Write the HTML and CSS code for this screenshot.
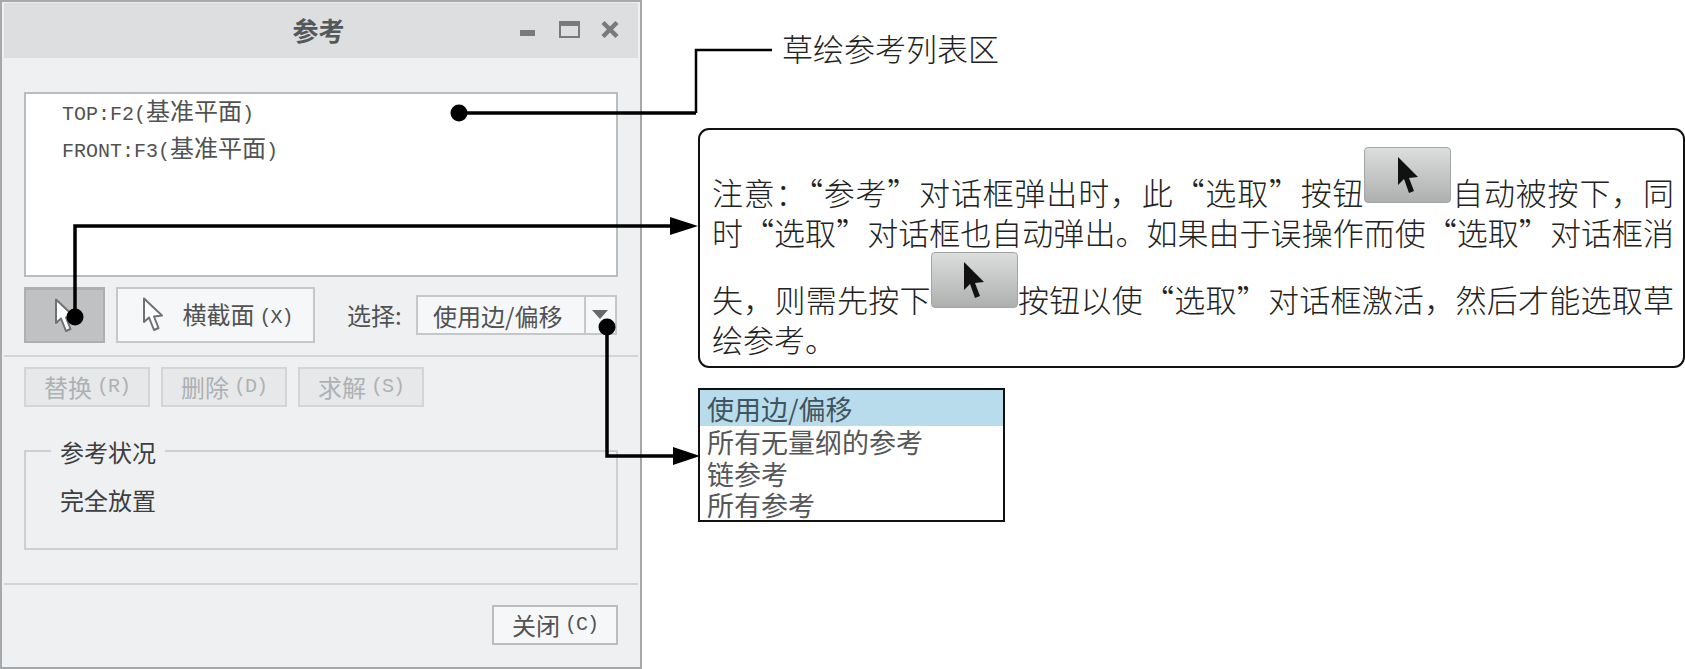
FILE: index.html
```html
<!DOCTYPE html>
<html lang="zh-CN">
<head>
<meta http-equiv="Content-Type" content="text/html; charset=utf-8">
<title>参考</title>
<link rel="stylesheet" href="styles.css">
</head>

<body>

<div class="page">
  <div class="dialog">
    <div class="dialog__title">
      <span class="dialog__name">参考</span>
      <div class="dialog__controls">
        <svg class="ctl ctl--min" width="15" height="6" viewBox="0 0 15 6"><rect width="15" height="6" fill="#777b7c"/></svg>
        <svg class="ctl ctl--max" width="21" height="17" viewBox="0 0 21 17"><rect x="1" y="1" width="19" height="15" fill="none" stroke="#777b7c" stroke-width="2"/><rect width="21" height="5" fill="#777b7c"/></svg>
        <svg class="ctl ctl--close" width="18" height="17" viewBox="0 0 18 17"><path d="M2 1.5 16 15.5M16 1.5 2 15.5" stroke="#777b7c" stroke-width="4.4" fill="none"/></svg>
      </div>
    </div>

    <div class="section">
      <div class="reflist">
        <p class="reflist__item">TOP:F2(<span class="cjk">基准平面</span>)</p>
        <p class="reflist__item">FRONT:F3(<span class="cjk">基准平面</span>)</p>
      </div>

      <div class="tools">
        <button class="btn btn--pressed" type="button">
          <svg width="22" height="36" viewBox="0 0 22 36"><path d="M2 1.500 2 25 7 20.500 12 33 16.500 31 12 19.500 20 18.500Z" fill="#fff" stroke="#6f7273" stroke-width="2" stroke-linejoin="round"/></svg>
        </button>
        <button class="btn btn--section" type="button">
          <svg width="22" height="36" viewBox="0 0 22 36"><path d="M2 1.500 2 25 7 20.500 12 33 16.500 31 12 19.500 20 18.500Z" fill="#fff" stroke="#6f7273" stroke-width="2" stroke-linejoin="round"/></svg>
          <span class="btn__text">横截面<span class="key">(X)</span></span>
        </button>
        <span class="tools__label">选择:</span>
        <div class="combo">
          <span class="combo__value">使用边/偏移</span>
          <span class="combo__arrow"></span>
        </div>
      </div>
    </div>

    <div class="section section--rule">
      <div class="actions">
        <button class="btn btn--off" type="button">替换<span class="key">(R)</span></button>
        <button class="btn btn--off" type="button">删除<span class="key">(D)</span></button>
        <button class="btn btn--off" type="button">求解<span class="key">(S)</span></button>
      </div>

      <fieldset class="status">
        <legend class="status__legend">参考状况</legend>
        <p class="status__text">完全放置</p>
      </fieldset>
    </div>

    <div class="section section--rule section--foot">
      <button class="btn btn--close" type="button">关闭<span class="key">(C)</span></button>
    </div>
  </div>

  <div class="notes">
    <p class="notes__label">草绘参考列表区</p>

    <div class="notebox">
      <p class="notebox__text">注意：“参考”对话框弹出时，此“选取”按钮<span class="pick"><svg width="26" height="40" viewBox="0 0 26 40"><path d="M3 1 3 29 9 23 14 37 19 35 14 22 23 21Z" fill="#111"/></svg></span>自动被按下，同时“选取”对话框也自动弹出。如果由于误操作而使“选取”对话框消失，则需先按下<span class="pick pick--low"><svg width="26" height="40" viewBox="0 0 26 40"><path d="M3 1 3 29 9 23 14 37 19 35 14 22 23 21Z" fill="#111"/></svg></span>按钮以使“选取”对话框激活，然后才能选取草绘参考。</p>
    </div>

    <ul class="droplist">
      <li class="droplist__item droplist__item--on">使用边/偏移</li>
      <li class="droplist__item">所有无量纲的参考</li>
      <li class="droplist__item">链参考</li>
      <li class="droplist__item">所有参考</li>
    </ul>
  </div>

  <svg class="leaders" width="1685" height="669" viewBox="0 0 1685 669">
    <g fill="none" stroke="#000" stroke-width="3.500">
      <path d="M459 113H696"/>
      <path d="M75 317V226H672"/>
      <path d="M607 327V456H675"/>
    </g>
    <path d="M696 113V50H772" fill="none" stroke="#000" stroke-width="2.500"/>
    <circle cx="459" cy="113" r="8.500"/>
    <circle cx="75" cy="317" r="8.500"/>
    <circle cx="607" cy="327" r="8.500"/>
    <path d="M670 217 698 226 670 235Z"/>
    <path d="M673 447 700 456 673 465Z"/>
  </svg>
</div>

</body>

</html>
```

FILE: styles.css
```css
/* page */
html,body{margin:0;padding:0;background:#fff;}
p,ul,li,fieldset,legend{margin:0;padding:0;}
ul{list-style:none;}
body{font-family:"Noto Sans CJK SC",sans-serif;color:#505253;}
.page{position:relative;display:flex;width:1685px;height:669px;overflow:hidden;}

/* dialog */
.dialog{width:642px;height:669px;flex-shrink:0;box-sizing:border-box;border:2px solid #a6a9ab;background:#eef0f2;}
.dialog__title{position:relative;display:flex;align-items:center;justify-content:center;height:55px;margin:1px 2px 0;background:#dcdedf;}
.dialog__name{font-size:26px;font-weight:700;line-height:1;margin:-2px 5px 0 0;color:#55585a;}
.dialog__controls{position:absolute;top:0;right:19px;bottom:0;display:flex;align-items:center;gap:21px;margin-top:-3px;}
.ctl--min{margin-top:8px;margin-right:3px;}

.section{padding:0 22px;}
.section--rule{margin:12px 2px 0;padding:0 20px;border-top:2px solid #d2d5d6;}
.section--foot{margin-top:33px;display:flex;justify-content:flex-end;padding-top:20px;}

.reflist{box-sizing:border-box;height:185px;margin-top:34px;border:2px solid #b9bdbe;background:#fff;}
.reflist__item{height:37px;padding-left:36px;font:20px/31px "Liberation Mono","Noto Sans CJK SC",monospace;color:#505253;white-space:nowrap;}
.cjk{font:24px/31px "Noto Sans CJK SC",sans-serif;}

.tools{display:flex;align-items:center;height:56px;margin-top:10px;}
.tools__label{margin-left:32px;width:70px;font-size:24px;line-height:1;}

.btn{display:flex;align-items:center;justify-content:center;box-sizing:border-box;margin:0;padding:0;font-family:inherit;font-size:24px;line-height:1;color:#505253;border:2px solid #c5c8c9;background:#f6f7f8;}
.btn--pressed{width:81px;height:56px;margin-right:11px;border-color:#adb0b1;border-top-width:3px;background:#c0c1c3;}
.btn--section{width:199px;height:56px;gap:18px;padding-left:4px;}
.btn__text{display:inline-block;}
.key{font:20px/1 "Liberation Mono",monospace;margin-left:5px;letter-spacing:-1px;vertical-align:1px;}

.combo{display:flex;align-items:stretch;box-sizing:border-box;width:201px;height:40px;margin-left:-1px;border:2px solid #c5c8c9;background:#f6f7f8;}
.combo__value{display:flex;align-items:center;box-sizing:border-box;width:168px;padding-left:15px;font-size:24px;border-right:2px solid #c5c8c9;white-space:nowrap;}
.combo__arrow{width:0;height:0;margin:13px 0 0 6px;border-style:solid;border-width:9px 8px 0;border-color:#666a6b transparent transparent;}

.actions{display:flex;gap:11px;margin-top:10px;}
.btn--off{width:126px;height:40px;color:#aeb1b3;background:#e6e8ea;border-color:#d3d6d7;}

.status{box-sizing:border-box;height:112px;margin-top:31px;padding:0 0 0 25px;border:2px solid #cdd0d1;}
.status__legend{padding:2px 9px 0;font-size:24px;line-height:24px;color:#3c3e3f;}
.status__text{margin:24px 0 0 9px;font-size:24px;line-height:24px;color:#3c3e3f;}

.btn--close{width:126px;height:40px;border-color:#b9bdbe;}

/* notes on the right */
.notes{width:987px;margin-left:56px;padding-top:28px;flex-shrink:0;}
.notes__label{padding-left:84px;font-size:31px;font-weight:300;line-height:40px;color:#222;}

.notebox{box-sizing:border-box;width:987px;height:240px;margin-top:60px;padding:17px 9px 0 12px;border:2px solid #111;border-radius:11px;}
.notebox__text{font-size:31px;font-weight:300;line-height:40px;color:#222;text-align:justify;}
.pick{display:inline-flex;align-items:flex-start;justify-content:center;box-sizing:border-box;width:87px;height:56px;padding-top:8px;vertical-align:9px;border:1px solid #a3a5a5;border-radius:4px;background:linear-gradient(#dcdddd,#aeb0b0);}
.pick--low{vertical-align:11px;}

.droplist{box-sizing:border-box;width:307px;height:134px;margin-top:20px;border:2px solid #111;background:#fff;}
.droplist__item{height:31.500px;padding-left:7px;font-size:27px;line-height:31px;color:#555758;white-space:nowrap;}
.droplist__item--on{height:36px;line-height:38px;background:#b9dcec;color:#3f5560;}

/* leader lines over everything */
.leaders{position:absolute;left:0;top:0;pointer-events:none;}
```
